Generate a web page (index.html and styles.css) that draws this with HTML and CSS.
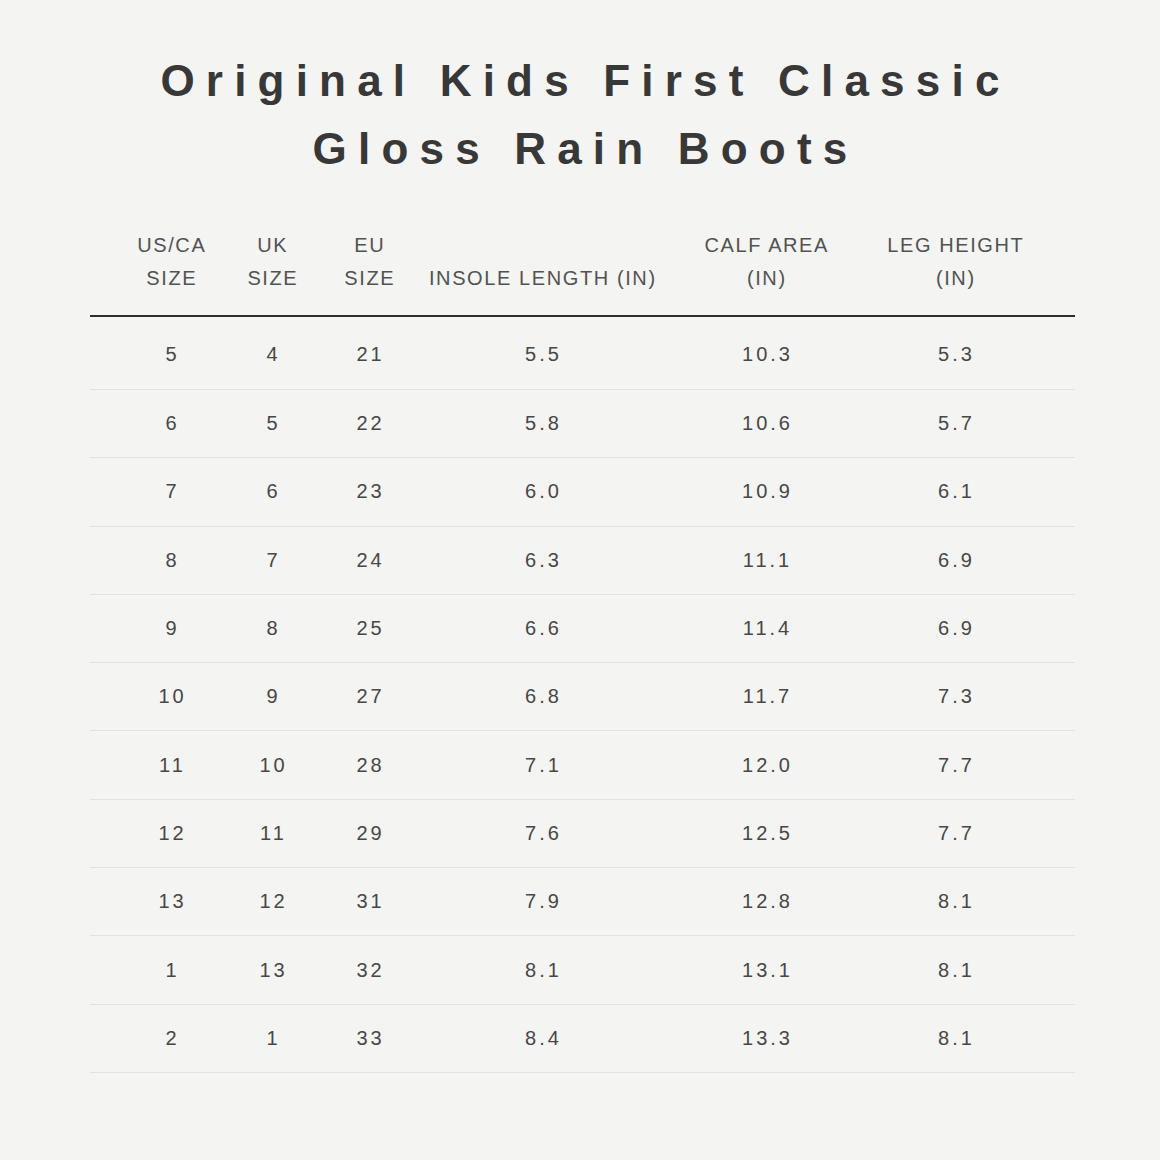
FILE: index.html
```html
<!DOCTYPE html>
<html>
<head>
<meta charset="utf-8">
<link rel="stylesheet" href="styles.css">
</head>
<body>
<div class="page">
  <h1 class="title">Original Kids First Classic<br>Gloss Rain Boots</h1>
  <div class="chart">
    <div class="row head">
      <div class="cell">US/CA<br>SIZE</div>
      <div class="cell">UK<br>SIZE</div>
      <div class="cell">EU<br>SIZE</div>
      <div class="cell">INSOLE LENGTH (IN)</div>
      <div class="cell">CALF AREA<br>(IN)</div>
      <div class="cell">LEG HEIGHT<br>(IN)</div>
    </div>
    <div class="row first"><div class="cell">5</div><div class="cell">4</div><div class="cell">21</div><div class="cell">5.5</div><div class="cell">10.3</div><div class="cell">5.3</div></div>
    <div class="row"><div class="cell">6</div><div class="cell">5</div><div class="cell">22</div><div class="cell">5.8</div><div class="cell">10.6</div><div class="cell">5.7</div></div>
    <div class="row"><div class="cell">7</div><div class="cell">6</div><div class="cell">23</div><div class="cell">6.0</div><div class="cell">10.9</div><div class="cell">6.1</div></div>
    <div class="row"><div class="cell">8</div><div class="cell">7</div><div class="cell">24</div><div class="cell">6.3</div><div class="cell">11.1</div><div class="cell">6.9</div></div>
    <div class="row"><div class="cell">9</div><div class="cell">8</div><div class="cell">25</div><div class="cell">6.6</div><div class="cell">11.4</div><div class="cell">6.9</div></div>
    <div class="row"><div class="cell">10</div><div class="cell">9</div><div class="cell">27</div><div class="cell">6.8</div><div class="cell">11.7</div><div class="cell">7.3</div></div>
    <div class="row"><div class="cell">11</div><div class="cell">10</div><div class="cell">28</div><div class="cell">7.1</div><div class="cell">12.0</div><div class="cell">7.7</div></div>
    <div class="row"><div class="cell">12</div><div class="cell">11</div><div class="cell">29</div><div class="cell">7.6</div><div class="cell">12.5</div><div class="cell">7.7</div></div>
    <div class="row"><div class="cell">13</div><div class="cell">12</div><div class="cell">31</div><div class="cell">7.9</div><div class="cell">12.8</div><div class="cell">8.1</div></div>
    <div class="row"><div class="cell">1</div><div class="cell">13</div><div class="cell">32</div><div class="cell">8.1</div><div class="cell">13.1</div><div class="cell">8.1</div></div>
    <div class="row"><div class="cell">2</div><div class="cell">1</div><div class="cell">33</div><div class="cell">8.4</div><div class="cell">13.3</div><div class="cell">8.1</div></div>
  </div>
</div>
</body>
</html>
```
FILE: styles.css
```css
html, body {
  margin: 0;
  padding: 0;
  background: #f4f4f2;
}
.page {
  width: 1160px;
  height: 1160px;
  padding-top: 47px;
  box-sizing: border-box;
  font-family: "Liberation Sans", Arial, sans-serif;
}
.title {
  margin: 0 0 0 11px;
  text-align: center;
  font-size: 44px;
  line-height: 68px;
  font-weight: bold;
  letter-spacing: 11.2px;
  color: #383838;
}
.chart {
  margin: 46px 0 0 90px;
  width: 985px;
}
.row {
  display: grid;
  grid-template-columns: 162px 40px 154px 192px 256px 122px;
  height: 68.3px;
  box-sizing: border-box;
  border-bottom: 1px solid #e2e2e0;
  align-items: center;
}
.row.first {
  height: 73px;
  padding-top: 3px;
}
.cell {
  display: flex;
  justify-content: center;
  text-align: center;
  white-space: nowrap;
  font-size: 20px;
  letter-spacing: 3px;
  color: #474747;
  padding-left: 3px;
}
.row.head {
  height: auto;
  padding-bottom: 20px;
  border-bottom: 2px solid #2e2e2e;
  align-items: end;
}
.head .cell {
  line-height: 33px;
  letter-spacing: 1.6px;
  padding-left: 1.6px;
  color: #525252;
}
```
